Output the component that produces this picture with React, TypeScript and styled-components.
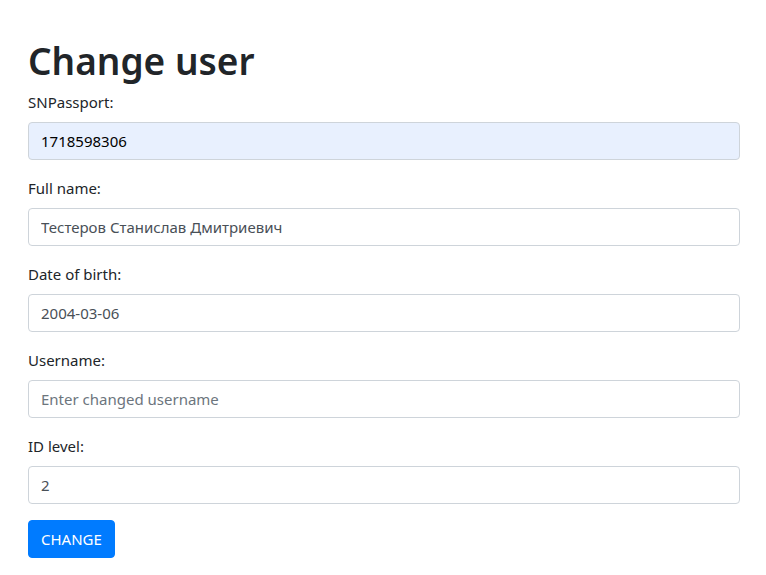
import React from "react";
import styled, { createGlobalStyle } from "styled-components";

const Global = createGlobalStyle`
  * { box-sizing: border-box; }
  body {
    margin: 0;
    font-family: "Noto Sans", "Liberation Sans", sans-serif;
    font-size: 15px;
    line-height: 1.5;
    color: #212529;
    background: #fff;
  }
`;

const Page = styled.div`
  padding: 37px 26px 0 28px;
`;

const Title = styled.h1`
  margin: 0 0 5px 0;
  font-size: 37px;
  font-weight: 600;
  line-height: 48px;
  color: #212529;
`;

const Group = styled.div`
  display: flex;
  flex-direction: column;
  margin-bottom: 16px;
`;

const Label = styled.label`
  display: block;
  margin-bottom: 8px;
  line-height: 24px;
`;

const Input = styled.input<{ $autofill?: boolean }>`
  display: block;
  width: 100%;
  height: 38px;
  padding: 6px 12px;
  font-family: inherit;
  font-size: 15px;
  line-height: 24px;
  color: ${(p) => (p.$autofill ? "#000" : "#495057")};
  background: ${(p) => (p.$autofill ? "#e8f0fe" : "#fff")};
  border: 1px solid #ced4da;
  border-radius: 4px;
  outline: none;
  &::placeholder { color: #6c757d; opacity: 1; }
`;

const Button = styled.button`
  display: inline-block;
  align-self: flex-start;
  height: 38px;
  padding: 6px 12px;
  font-family: inherit;
  font-size: 15px;
  line-height: 24px;
  color: #fff;
  background: #007bff;
  border: 1px solid #007bff;
  border-radius: 4px;
  text-transform: uppercase;
`;

export default function App() {
  return (
    <>
      <Global />
      <Page>
        <Title>Change user</Title>
        <Group>
          <Label>SNPassport:</Label>
          <Input $autofill defaultValue="1718598306" />
        </Group>
        <Group>
          <Label>Full name:</Label>
          <Input defaultValue="Тестеров Станислав Дмитриевич" />
        </Group>
        <Group>
          <Label>Date of birth:</Label>
          <Input defaultValue="2004-03-06" />
        </Group>
        <Group>
          <Label>Username:</Label>
          <Input placeholder="Enter changed username" />
        </Group>
        <Group>
          <Label>ID level:</Label>
          <Input defaultValue="2" />
        </Group>
        <Button>Change</Button>
      </Page>
    </>
  );
}
